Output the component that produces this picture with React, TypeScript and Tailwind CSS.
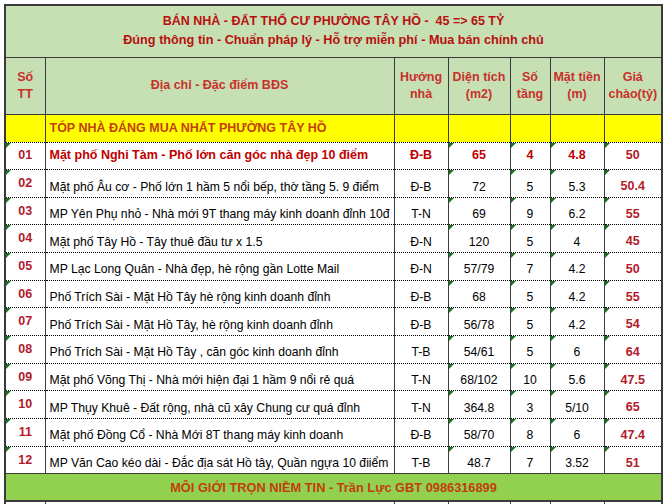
import React from 'react';

interface Listing {
  no: string;
  desc: string;
  dir: string;
  area: string;
  floors: string;
  front: string;
  price: string;
  hot?: boolean;
}

const listings: Listing[] = [
  { no: '01', desc: 'Mặt phố Nghi Tàm - Phố lớn căn góc nhà đẹp 10 điểm', dir: 'Đ-B', area: '65', floors: '4', front: '4.8', price: '50', hot: true },
  { no: '02', desc: 'Mặt phố Âu cơ - Phố lớn 1 hầm 5 nổi bếp, thờ tầng 5. 9 điểm', dir: 'Đ-B', area: '72', floors: '5', front: '5.3', price: '50.4' },
  { no: '03', desc: 'MP Yên Phụ nhỏ - Nhà mới 9T thang máy kinh doanh đỉnh 10đ', dir: 'T-N', area: '69', floors: '9', front: '6.2', price: '55' },
  { no: '04', desc: 'Mặt phố Tây Hồ - Tây thuê đầu tư x 1.5', dir: 'Đ-N', area: '120', floors: '5', front: '4', price: '45' },
  { no: '05', desc: 'MP Lạc Long Quân - Nhà đẹp, hè rộng gần Lotte Mail', dir: 'Đ-N', area: '57/79', floors: '7', front: '4.2', price: '50' },
  { no: '06', desc: 'Phố Trích Sài - Mặt Hồ Tây hè rộng kinh doanh đỉnh', dir: 'Đ-B', area: '68', floors: '5', front: '4.2', price: '55' },
  { no: '07', desc: 'Phố Trích Sài - Mặt Hồ Tây, hè rộng kinh doanh đỉnh', dir: 'Đ-B', area: '56/78', floors: '5', front: '4.2', price: '54' },
  { no: '08', desc: 'Phố Trích Sài - Mặt Hồ Tây , căn góc kinh doanh đỉnh', dir: 'T-B', area: '54/61', floors: '5', front: '6', price: '64' },
  { no: '09', desc: 'Mặt phố Võng Thị - Nhà mới hiện đại 1 hầm 9 nổi rẻ quá', dir: 'T-N', area: '68/102', floors: '10', front: '5.6', price: '47.5' },
  { no: '10', desc: 'MP Thụy Khuê - Đất rộng, nhà cũ xây Chung cư quá đỉnh', dir: 'T-N', area: '364.8', floors: '3', front: '5/10', price: '65' },
  { no: '11', desc: 'Mặt phố Đồng Cổ - Nhà Mới 8T thang máy kinh doanh', dir: 'Đ-B', area: '58/70', floors: '8', front: '6', price: '47.4' },
  { no: '12', desc: 'MP Văn Cao kéo dài - Đắc địa sát Hồ tây, Quần ngựa 10 điiểm', dir: 'T-B', area: '48.7', floors: '7', front: '3.52', price: '51' },
];

// little green "number stored as text" flag excel draws in the corner
function Flag() {
  return (
    <span className="absolute left-0 top-0 w-0 h-0 border-t-[5px] border-r-[5px] border-t-[#17751f] border-r-transparent" />
  );
}

const cellLine = 'border-r border-b border-[#3c3c3c] border-b-black [border-bottom-style:dotted]';
const lastCell = 'border-b border-black [border-bottom-style:dotted]';

export default function App() {
  return (
    <div className="w-[665px] h-[504px] overflow-hidden bg-white pl-[4px] pt-[4px] font-['Liberation_Sans',Arial,sans-serif]">
      <table className="table-fixed border-collapse w-[657px] border-2 border-[#3a3a3a] text-[12.2px] text-black">
        <colgroup>
          <col className="w-[40px]" />
          <col className="w-[349px]" />
          <col className="w-[54px]" />
          <col className="w-[62px]" />
          <col className="w-[40px]" />
          <col className="w-[54px]" />
          <col className="w-[58px]" />
        </colgroup>
        <tbody>
          <tr className="h-[52px] bg-[#c6e0b4]">
            <td colSpan={7} className="border-b border-[#3a3a3a] text-center font-bold text-[#b80f0f] leading-[19px]">
              <div className="text-[12.5px]">BÁN NHÀ - ĐẤT THỔ CƯ PHƯỜNG TÂY HỒ -&nbsp; 45 =&gt; 65 TỶ</div>
              <div className="text-[12.7px]">Đúng thông tin - Chuẩn pháp lý - Hỗ trợ miễn phí - Mua bán chính chủ</div>
            </td>
          </tr>
          <tr className="h-[57px] bg-[#c6e0b4] text-center font-bold text-[12.5px] text-[#c9302c] leading-[17px]">
            <td className="border-r border-b border-[#3a3a3a]">Số<br />TT</td>
            <td className="border-r border-b border-[#3a3a3a]">Địa chỉ - Đặc điểm BĐS</td>
            <td className="border-r border-b border-[#3a3a3a]">Hướng<br />nhà</td>
            <td className="border-r border-b border-[#3a3a3a]">Diện tích<br />(m2)</td>
            <td className="border-r border-b border-[#3a3a3a]">Số<br />tầng</td>
            <td className="border-r border-b border-[#3a3a3a]">Mặt tiền<br />(m)</td>
            <td className="border-b border-[#3a3a3a]">Giá<br />chào(tỷ)</td>
          </tr>
          <tr className="h-[28px] bg-[#ffff00]">
            <td className={cellLine} />
            <td className={`${cellLine} pl-1 font-bold text-[12.5px] text-[#c4400f] align-middle`}>TÓP NHÀ ĐÁNG MUA NHẤT PHƯỜNG TÂY HỒ</td>
            <td className={cellLine} />
            <td className={cellLine} />
            <td className={cellLine} />
            <td className={cellLine} />
            <td className={lastCell} />
          </tr>
          {listings.map((item) => (
            <tr
              key={item.no}
              className={`h-[27.67px] bg-white ${item.hot ? 'align-middle font-bold text-[12.5px] text-[#c00000]' : 'align-bottom'}`}
            >
              <td className={`${cellLine} relative text-center align-middle font-bold text-[12.5px] text-[#b3192b]`}>
                <Flag />
                {item.no}
              </td>
              <td className={`${cellLine} pl-1 pb-[1px] whitespace-nowrap overflow-hidden`}>{item.desc}</td>
              <td className={`${cellLine} text-center pb-[1px]`}>{item.dir}</td>
              <td className={`${cellLine} relative text-center pb-[1px]`}>
                <Flag />
                {item.area}
              </td>
              <td className={`${cellLine} relative text-center pb-[1px]`}>
                <Flag />
                {item.floors}
              </td>
              <td className={`${cellLine} relative text-center pb-[1px]`}>
                <Flag />
                {item.front}
              </td>
              <td className={`${lastCell} relative text-center pb-[1px] font-bold text-[12.5px] text-[#b3192b]`}>
                <Flag />
                {item.price}
              </td>
            </tr>
          ))}
          <tr className="h-[27px] bg-[#92d050]">
            <td colSpan={7} className="border-t border-b-2 border-[#3a3a3a] text-center font-bold text-[12.8px] text-[#c0400c]">
              MÔI GIỚI TRỌN NIỀM TIN - Trần Lực GBT 0986316899
            </td>
          </tr>
          <tr className="h-[20px]">
            <td className="border-r border-[#3a3a3a]" />
            <td className="border-r border-[#3a3a3a]" />
            <td className="border-r border-[#3a3a3a]" />
            <td className="border-r border-[#3a3a3a]" />
            <td className="border-r border-[#3a3a3a]" />
            <td className="border-r border-[#3a3a3a]" />
            <td />
          </tr>
        </tbody>
      </table>
    </div>
  );
}
